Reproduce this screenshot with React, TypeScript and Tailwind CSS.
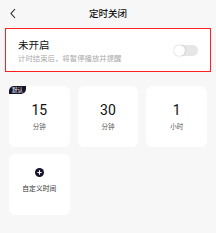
const font = { fontFamily: '"Noto Sans CJK SC", "Noto Sans", sans-serif' }

function Option({ value, unit, badge }: { value: string; unit: string; badge?: boolean }) {
  return (
    <div className="relative h-[61px] rounded-[6px] bg-white flex flex-col items-center pt-[16px]">
      {badge && (
        <span className="absolute left-0 top-0 h-[8px] px-[3px] rounded-tl-[5px] rounded-br-[5px] bg-[#15142a] text-white text-[5.5px] leading-[8px]">
          默认
        </span>
      )}
      <span className="text-[14px] leading-[16px] text-[#111]" style={{ fontFamily: 'Roboto, "Noto Sans", sans-serif' }}>
        {value}
      </span>
      <span className="mt-[4px] text-[6.5px] leading-[8px] text-[#555]">{unit}</span>
    </div>
  )
}

export default function App() {
  return (
    <div className="w-[216px] h-[233px] overflow-hidden bg-[#f7f7f7]" style={font}>
      {/* header */}
      <div className="h-[26px] flex items-center px-[9px]">
        <svg width="8" height="11" viewBox="0 0 8 11" className="shrink-0">
          <path d="M6 1 L2 5.5 L6 10" fill="none" stroke="#222" strokeWidth="1.1" />
        </svg>
        <div className="flex-1 text-center text-[9.5px] font-medium text-[#111] pr-[8px]">定时关闭</div>
      </div>

      {/* switch row */}
      <div className="mt-[2px] mx-[5px] h-[44px] border border-[#ff1f1f] bg-white flex items-center justify-between pl-[12px] pr-[12px]">
        <div className="flex flex-col">
          <span className="text-[10.5px] leading-[13px] text-[#111]">未开启</span>
          <span className="mt-[2px] text-[7.4px] leading-[10px] text-[#aaa]">计时结束后，将暂停播放并提醒</span>
        </div>
        <div className="w-[24px] h-[11px] rounded-full bg-[#e6e6e6] flex items-center">
          <div className="w-[11px] h-[11px] rounded-full bg-white shadow-[0_0_1.5px_rgba(0,0,0,0.3)]" />
        </div>
      </div>

      {/* options */}
      <div className="mt-[14px] px-[9px] grid grid-cols-3 gap-x-[8px] gap-y-[7px]">
        <Option value="15" unit="分钟" badge />
        <Option value="30" unit="分钟" />
        <Option value="1" unit="小时" />
        <div className="h-[61px] rounded-[6px] bg-white flex flex-col items-center pt-[14px]">
          <svg width="9" height="9" viewBox="0 0 10 10">
            <circle cx="5" cy="5" r="5" fill="#15142a" />
            <path d="M5 2.6 V7.4 M2.6 5 H7.4" stroke="white" strokeWidth="1.2" />
          </svg>
          <span className="mt-[7px] text-[6.8px] leading-[8px] text-[#333]">自定义时间</span>
        </div>
      </div>
    </div>
  )
}
